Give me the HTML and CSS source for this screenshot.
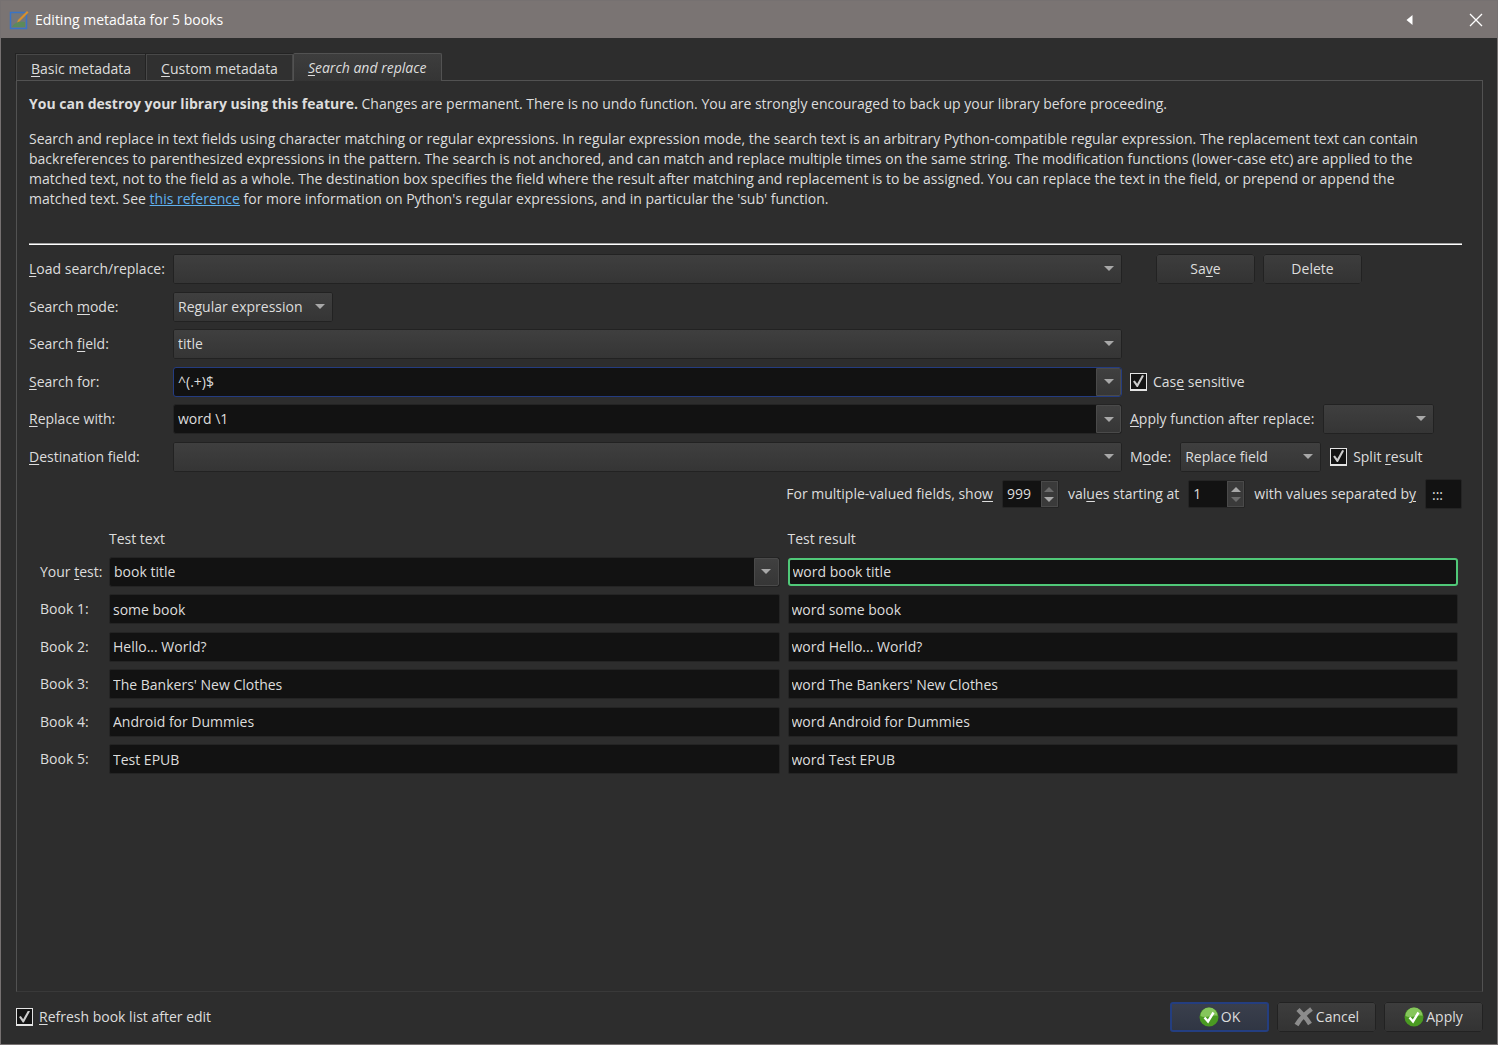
FILE: index.html
```html
<!DOCTYPE html>
<html lang="en">
  <head>
    <meta charset="UTF-8" />
    <meta name="viewport" content="width=device-width, initial-scale=1.0" />
    <title>Editing metadata for 5 books</title>
    <link rel="stylesheet" href="styles.css" />
  </head>
  <body>
    <div class="window">
      <header class="titlebar">
        <svg class="app-icon" viewBox="0 0 20 20" width="20" height="20" aria-hidden="true">
          <rect x="1.5" y="2.5" width="16" height="16" fill="#74777a" stroke="#3a74c4" stroke-width="1.500" />
          <path d="M3 17c2-4 6-6 13-5v5z" fill="#5c8a5a" />
          <path d="M8 12.500l1-2.500 9-9 1.500 1.500-9 9z" fill="#d8902c" />
        </svg>
        <h1>Editing metadata for 5 books</h1>
        <button type="button" class="title-button" aria-label="More">
          <svg viewBox="0 0 10 12" width="10" height="12"><path d="M7.500 1v10L1.500 6z" fill="#fff" /></svg>
        </button>
        <button type="button" class="title-button close" aria-label="Close">
          <svg viewBox="0 0 14 14" width="14" height="14"><path d="M1 1l12 12M13 1L1 13" stroke="#fff" stroke-width="1.300" /></svg>
        </button>
      </header>

      <form class="dialog">
        <div class="tabs" role="tablist">
          <button type="button" class="tab" role="tab"><u>B</u>asic metadata</button>
          <button type="button" class="tab" role="tab"><u>C</u>ustom metadata</button>
          <button type="button" class="tab active" role="tab" aria-selected="true"><u>S</u>earch and replace</button>
        </div>

        <div class="pane" role="tabpanel">
          <div class="help">
            <p>
              <b>You can destroy your library using this feature.</b> Changes are permanent. There is no
              undo function. You are strongly encouraged to back up your library before proceeding.
            </p>
            <p>
              Search and replace in text fields using character matching or regular expressions. In regular
              expression mode, the search text is an arbitrary Python-compatible regular expression. The
              replacement text can contain backreferences to parenthesized expressions in the pattern. The
              search is not anchored, and can match and replace multiple times on the same string. The
              modification functions (lower-case etc) are applied to the matched text, not to the field as a
              whole. The destination box specifies the field where the result after matching and replacement
              is to be assigned. You can replace the text in the field, or prepend or append the matched
              text. See <a href="#">this reference</a> for more information on Python's regular expressions,
              and in particular the 'sub' function.
            </p>
          </div>
          <hr />

          <div class="options">
            <label for="load"><u>L</u>oad search/replace:</label>
            <div class="select"><select id="load"><option></option></select></div>
            <div class="side buttons">
              <button type="button" class="button">Sa<u>v</u>e</button>
              <button type="button" class="button">Delete</button>
            </div>

            <label for="mode">Search <u>m</u>ode:</label>
            <div class="select mode">
              <select id="mode">
                <option>Regular expression</option>
                <option>Character match</option>
              </select>
            </div>
            <div class="side"></div>

            <label for="field">Search <u>f</u>ield:</label>
            <div class="select">
              <select id="field">
                <option>title</option>
                <option>authors</option>
              </select>
            </div>
            <div class="side"></div>

            <label for="searchFor"><u>S</u>earch for:</label>
            <div class="combo focused">
              <input type="text" id="searchFor" value="^(.+)$" />
              <button type="button" aria-label="Search history"></button>
            </div>
            <div class="side">
              <label class="check"><input type="checkbox" checked /><span>Cas<u>e</u> sensitive</span></label>
            </div>

            <label for="replaceWith"><u>R</u>eplace with:</label>
            <div class="combo">
              <input type="text" id="replaceWith" value="word \1" />
              <button type="button" aria-label="Replace history"></button>
            </div>
            <div class="side">
              <label for="applyFunction"><u>A</u>pply function after replace:</label>
              <div class="select function"><select id="applyFunction"><option></option></select></div>
            </div>

            <label for="destination"><u>D</u>estination field:</label>
            <div class="select"><select id="destination"><option></option></select></div>
            <div class="side">
              <label for="replaceMode">M<u>o</u>de:</label>
              <div class="select replace-mode">
                <select id="replaceMode">
                  <option>Replace field</option>
                  <option>Prepend to field</option>
                  <option>Append to field</option>
                </select>
              </div>
              <label class="check"><input type="checkbox" checked /><span>Split <u>r</u>esult</span></label>
            </div>

            <div class="multiple">
              <label for="showCount">For multiple-valued fields, sho<u>w</u></label>
              <div class="spin at-max">
                <input type="number" id="showCount" value="999" max="999" />
                <span class="arrows"></span>
              </div>
              <label for="startAt">val<u>u</u>es starting at</label>
              <div class="spin at-min">
                <input type="number" id="startAt" value="1" min="1" />
                <span class="arrows"></span>
              </div>
              <label for="separator">with values separated b<u>y</u></label>
              <input type="text" class="text separator" id="separator" value=":::" />
            </div>
          </div>

          <div class="tests">
            <span></span>
            <span class="heading">Test text</span>
            <span class="heading">Test result</span>

            <label for="test">Your <u>t</u>est:</label>
            <div class="combo">
              <input type="text" id="test" value="book title" />
              <button type="button" aria-label="Test history"></button>
            </div>
            <input type="text" class="text match" value="word book title" aria-label="Your test result" readonly />

            <label for="book1">Book 1:</label>
            <input type="text" class="text" id="book1" value="some book" readonly />
            <input type="text" class="text" value="word some book" aria-label="Book 1 result" readonly />

            <label for="book2">Book 2:</label>
            <input type="text" class="text" id="book2" value="Hello... World?" readonly />
            <input type="text" class="text" value="word Hello... World?" aria-label="Book 2 result" readonly />

            <label for="book3">Book 3:</label>
            <input type="text" class="text" id="book3" value="The Bankers' New Clothes" readonly />
            <input type="text" class="text" value="word The Bankers' New Clothes" aria-label="Book 3 result" readonly />

            <label for="book4">Book 4:</label>
            <input type="text" class="text" id="book4" value="Android for Dummies" readonly />
            <input type="text" class="text" value="word Android for Dummies" aria-label="Book 4 result" readonly />

            <label for="book5">Book 5:</label>
            <input type="text" class="text" id="book5" value="Test EPUB" readonly />
            <input type="text" class="text" value="word Test EPUB" aria-label="Book 5 result" readonly />
          </div>
        </div>

        <footer class="footer">
          <label class="check"><input type="checkbox" checked /><span><u>R</u>efresh book list after edit</span></label>
          <button type="submit" class="button primary">
            <svg viewBox="0 0 20 20" width="20" height="20" aria-hidden="true">
              <circle cx="10" cy="10" r="9.500" fill="#4a9a22" />
              <path d="M1.500 9a8.500 8.500 0 0 1 17 0c-4-2-12 3-17 0z" fill="#86c65c" />
              <path d="M5.500 10.500l3.500 4 5.500-9" fill="none" stroke="#fff" stroke-width="2.400" />
            </svg>
            OK
          </button>
          <button type="button" class="button">
            <svg viewBox="0 0 20 20" width="20" height="20" aria-hidden="true">
              <path d="M4 2.500c4 4 8 8 12 14.500M17.500 2C12 6 6 12 2.500 18" fill="none" stroke="#8c8c8c" stroke-width="4.500" />
            </svg>
            Cancel
          </button>
          <button type="button" class="button">
            <svg viewBox="0 0 20 20" width="20" height="20" aria-hidden="true">
              <circle cx="10" cy="10" r="9.500" fill="#4a9a22" />
              <path d="M1.500 9a8.500 8.500 0 0 1 17 0c-4-2-12 3-17 0z" fill="#86c65c" />
              <path d="M5.500 10.500l3.500 4 5.500-9" fill="none" stroke="#fff" stroke-width="2.400" />
            </svg>
            Apply
          </button>
        </footer>
      </form>
    </div>
  </body>
</html>
```

FILE: styles.css
```css
* {
  box-sizing: border-box;
}

body {
  margin: 0;
  background-color: #2d2d2d;
  color: #dddddd;
  font-family: "Open Sans", "Noto Sans", sans-serif;
  font-size: 14px;
  line-height: 20px;
}

input,
select,
button {
  margin: 0;
  font: inherit;
  color: inherit;
}

u {
  text-decoration: underline;
  text-underline-offset: 2px;
}

.window {
  display: flex;
  flex-direction: column;
  min-height: 100vh;
  border: 1px solid #767171;
}

/* Title bar */
.titlebar {
  display: flex;
  align-items: center;
  height: 37px;
  padding: 0 8px;
  background-color: #7a7473;
  color: #ffffff;
}

.titlebar h1 {
  flex: 1;
  margin: 0 0 0 6px;
  font-size: 14px;
  font-weight: normal;
}

.title-button {
  display: flex;
  padding: 0;
  border: 0;
  background: none;
}

.title-button.close {
  margin: 0 6px 0 54px;
}

/* Tabs */
.dialog {
  flex: 1;
  display: flex;
  flex-direction: column;
  padding: 15px 14px 12px 15px;
}

.tabs {
  display: flex;
  align-items: flex-end;
}

.tab {
  height: 26px;
  padding: 2px 14px 0;
  border: 1px solid #484848;
  border-bottom: 0;
  background-color: #303030;
  outline: 1px solid #232323;
}

.tab.active {
  position: relative;
  height: 28px;
  padding-top: 0;
  margin-bottom: -1px;
  background: linear-gradient(#3d3d3d, #353535);
  border-color: #525252;
  border-radius: 2px 2px 0 0;
  outline: 0;
  font-style: italic;
}

.pane {
  flex: 1;
  padding: 13px 20px 0 12px;
  border: 1px solid #525252;
  border-bottom-color: #393939;
}

.help {
  min-height: 149px;
  padding-right: 20px;
}

.help p {
  margin: 0 0 15px;
}

.help a {
  color: #5fb0ee;
}

hr {
  height: 2px;
  margin: 0 0 9px;
  border: 0;
  border-top: 1px solid #a0a0a0;
  background-color: #ffffff;
}

/* Fields */
.options {
  display: grid;
  grid-template-columns: 136px 1fr 332px;
  grid-auto-rows: 30px 31px;
  gap: 7px 8px;
  align-items: center;
}

label {
  white-space: nowrap;
}

.select {
  position: relative;
  height: 30px;
}

.select select {
  width: 100%;
  height: 30px;
  padding: 0 24px 0 4px;
  appearance: none;
  border: 1px solid #4a4a4a;
  border-radius: 2px;
  outline: 1px solid #222222;
  outline-offset: -1px;
  background: linear-gradient(#3f3f3f, #353535);
}

.select::after,
.combo button::after {
  content: "";
  border: 5px solid transparent;
  border-top-color: #a8a8a8;
  border-bottom: 0;
}

.select::after {
  position: absolute;
  right: 8px;
  top: 12px;
  pointer-events: none;
}

.select.mode {
  width: 160px;
}

.select.function {
  width: 111px;
}

.select.replace-mode {
  width: 141px;
}

.combo {
  display: flex;
  height: 30px;
  border: 1px solid #242424;
  border-radius: 3px;
  background-color: #121212;
}

.combo.focused {
  border-color: #243c80;
}

.combo input {
  flex: 1;
  min-width: 0;
  padding: 0 4px;
  border: 0;
  outline: 0;
  background: none;
}

.combo button {
  display: flex;
  align-items: center;
  justify-content: center;
  width: 25px;
  padding: 0;
  border: 1px solid #4a4a4a;
  border-radius: 0 2px 2px 0;
  background: linear-gradient(#404040, #363636);
}

.side {
  display: flex;
  align-items: center;
  gap: 9px;
}

.side.buttons {
  gap: 8px;
  padding-left: 26px;
}

.button {
  display: flex;
  align-items: center;
  justify-content: center;
  width: 99px;
  height: 30px;
  padding: 0;
  border: 1px solid #4a4a4a;
  border-radius: 3px;
  outline: 1px solid #222222;
  outline-offset: -1px;
  background: linear-gradient(#3d3d3d, #333333);
}

.button svg {
  margin-right: 2px;
}

.button.primary {
  border: 2px solid #243e80;
  outline: 0;
  background: linear-gradient(#3a3f4c, #303644);
}

.check {
  display: flex;
  align-items: center;
  gap: 6px;
}

.check input {
  display: flex;
  align-items: center;
  justify-content: center;
  width: 17px;
  height: 18px;
  appearance: none;
  border: 1px solid #e4e4e4;
  border-bottom-width: 2px;
  background-color: #141414;
}

.check input:checked::before {
  content: "";
  width: 11px;
  height: 12px;
  background-color: #cccccc;
  clip-path: polygon(0 55%, 16% 45%, 38% 72%, 82% 0, 100% 6%, 44% 100%, 34% 100%);
}

.multiple {
  grid-column: 1 / -1;
  display: flex;
  align-items: center;
  justify-content: flex-end;
  gap: 9px;
}

.spin {
  display: flex;
  width: 57px;
  height: 28px;
  border: 1px solid #242424;
  border-radius: 2px;
  background-color: #121212;
}

.spin input {
  flex: 1;
  min-width: 0;
  padding: 0 4px;
  appearance: textfield;
  border: 0;
  background: none;
}

.spin input::-webkit-inner-spin-button {
  display: none;
}

.arrows {
  display: flex;
  flex-direction: column;
  align-items: center;
  justify-content: center;
  gap: 5px;
  width: 17px;
  border: 1px solid #4a4a4a;
  background-color: #3a3a3a;
}

.arrows::before,
.arrows::after {
  content: "";
  border: 5px solid transparent;
}

.arrows::before {
  border-top: 0;
  border-bottom-color: #a8a8a8;
}

.arrows::after {
  border-bottom: 0;
  border-top-color: #a8a8a8;
}

.at-max .arrows::before {
  border-bottom-color: #6c6c6c;
}

.at-min .arrows::after {
  border-top-color: #6c6c6c;
}

.text {
  width: 100%;
  height: 30px;
  padding: 0 3px;
  border: 1px solid #242424;
  border-radius: 2px;
  background-color: #121212;
}

.text.separator {
  width: 37px;
  padding: 0 6px;
}

.text.match {
  height: 28px;
  border: 2px solid #50c878;
  border-radius: 3px;
}

/* Test table */
.tests {
  display: grid;
  grid-template-columns: 61px 1fr 1fr;
  grid-template-rows: 20px;
  grid-auto-rows: 31px 30px;
  gap: 7px 8px;
  align-items: center;
  padding: 20px 4px 0 11px;
}

/* Footer */
.footer {
  display: flex;
  align-items: center;
  gap: 8px;
  padding-top: 10px;
}

.footer .check {
  margin-right: auto;
}
```
